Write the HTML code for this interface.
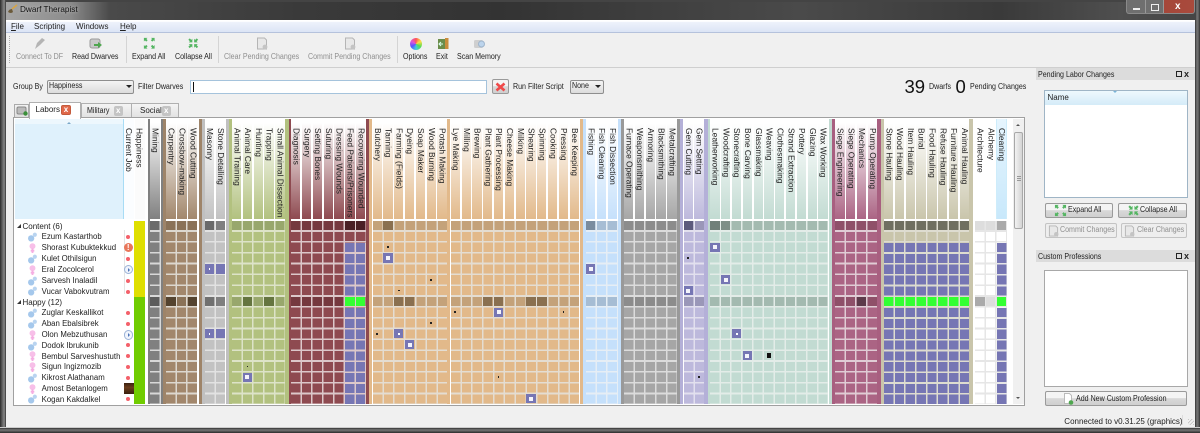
<!DOCTYPE html>
<html><head><meta charset="utf-8"><title>Dwarf Therapist</title>
<style>
html,body{margin:0;padding:0;background:#333}
#w{position:relative;width:1200px;height:433px;overflow:hidden;font:8px "Liberation Sans",sans-serif;color:#222;background:#f0f0f0;filter:blur(.3px)}
#w div,#w span,#w svg{position:absolute}
.t{white-space:nowrap;line-height:10px;transform:scaleX(.885);transform-origin:0 50%}
.t.u{transform:none}
.dis{color:#8f8f8f}
.combo{background:linear-gradient(#f4f4f4,#dcdcdc);border:1px solid #8e8e8e;border-radius:2px;box-sizing:border-box}
.btn{background:linear-gradient(#f4f4f4 45%,#d8d8d8 50%,#cfcfcf);border:1px solid #9a9a9a;border-radius:2px;box-sizing:border-box}
.btn2{background:#eee;border:1px solid #c4c4c4;border-radius:2px;box-sizing:border-box}
.dock{background:#dcdcdc;left:1036px;width:159px;height:12.5px}
.g{top:119px;height:284.5px;overflow:hidden}
.h{left:0;top:0;right:0;height:100.3px;display:flex}
.h i{display:block;flex:0 0 9.3px;margin-right:1.53px;height:100.3px;box-sizing:border-box;padding:9px 0 0 0;font:normal 8.4px/9.3px "Liberation Sans",sans-serif;writing-mode:vertical-rl;white-space:nowrap;color:#222;background:linear-gradient(#fff 4%,var(--b))}
.c{left:0;right:0;top:102px;bottom:0;background:repeating-linear-gradient(90deg,transparent 0 9.3px,var(--g) 9.3px 10.83px),repeating-linear-gradient(180deg,transparent 0 9.2px,var(--g) 9.2px 10.83px),var(--b)}
.r{left:0;right:0;height:9.2px;top:calc(var(--i)*10.83px);background:repeating-linear-gradient(90deg,var(--d) 0 9.3px,var(--g) 9.3px 10.83px)}
.k{right:0;top:calc(var(--i)*10.83px);height:calc(var(--n)*10.83px);background:repeating-linear-gradient(90deg,transparent 0 9.3px,var(--g) 9.3px 10.83px),repeating-linear-gradient(180deg,transparent 0 9.2px,var(--g) 9.2px 10.83px),#7676b4}
.p{left:calc(var(--c)*10.83px);top:calc(var(--i)*10.83px);width:9.3px;height:9.2px}
.q{background:#7676b4}
.q:after{content:"";position:absolute;left:2.6px;top:2.6px;width:4px;height:4px;background:#f4f4fb}
.s{background:#7676b4}
.s:after{content:"";position:absolute;left:4px;top:4px;width:1.6px;height:1.6px;background:#fff}
.o:after{content:"";position:absolute;left:3.8px;top:3.8px;width:1.6px;height:1.6px;background:#222}
.bar{top:119px;height:284.5px}
.n{left:41.6px;font-size:7.8px;line-height:10px;white-space:nowrap;letter-spacing:.02px}
.gi{left:28px;width:9px;height:10px}
.dot{left:126px;width:4px;height:4px;border-radius:50%;background:#f4606a}
</style></head><body>
<div id="w">
<svg width="0" height="0" style="left:0;top:0">
<defs>
<symbol id="ex" viewBox="0 0 14 14"><path d="M1 1h4l-1.200 1.200 1.400 1.400L3.600 5.200 2.200 3.800 1 5zM13 1v4l-1.200-1.200-1.400 1.400-1.600-1.600 1.400-1.400L9 1zM1 13V9l1.200 1.200 1.400-1.400 1.600 1.600-1.400 1.400L5 13zM13 13H9l1.200-1.200-1.400-1.400 1.600-1.600 1.400 1.400L13 9z" fill="#54b562"/></symbol>
<symbol id="co" viewBox="0 0 14 14"><path d="M6 6H2l1.200-1.200L1.500 3.100 3.100 1.500l1.700 1.700L6 2zM8 6V2l1.200 1.200 1.700-1.700 1.600 1.600-1.700 1.700L12 6zM6 8v4l-1.200-1.200-1.700 1.700-1.600-1.600 1.700-1.700L2 8zM8 8h4l-1.200 1.200 1.700 1.700-1.600 1.600-1.700-1.700L8 12z" fill="#54b562"/></symbol>
<symbol id="ma" viewBox="0 0 10 11"><circle cx="3.500" cy="7" r="3.500" fill="#a5c8ec"/><circle cx="7.600" cy="3" r="2.300" fill="#b9d4f0"/></symbol>
<symbol id="fe" viewBox="0 0 10 11"><circle cx="5" cy="3.500" r="3.300" fill="#f7bfe8"/><path d="M5 6v5M3 8.500h4" stroke="#f5aee2" stroke-width="2" fill="none"/></symbol>
<symbol id="doc" viewBox="0 0 12 13"><path d="M1.500 1h7l2 2v9h-9z" fill="#e8e8e8" stroke="#b5b5b5"/><circle cx="9" cy="10" r="2.400" fill="#c4c4c4"/></symbol>
</defs></svg>

<!-- window frame -->
<div style="left:0;top:0;width:1200px;height:20px;background:linear-gradient(90deg,#a8a8a8 0,#8c8c8c 70px,#4a4a4a 110px,#3a3a3a 300px,#333 500px,#4a4a4a 800px,#3a3a3a 1000px,#4f4f4f 1120px,#444 1200px)"></div>
<div style="left:0;top:0;width:1200px;height:2px;background:#444"></div>
<div style="left:0;top:0;width:6px;height:433px;background:linear-gradient(90deg,#2a2a2a,#555 30%,#888 70%,#333)"></div>
<div style="left:1195px;top:0;width:5px;height:433px;background:linear-gradient(90deg,#333,#777 40%,#555 80%,#2a2a2a)"></div>
<div style="left:0;top:427px;width:1200px;height:6px;background:linear-gradient(#fff 0 .5px,#333 1px,#777 3px,#2a2a2a)"></div>
<svg style="left:7px;top:4px" width="11" height="11" viewBox="0 0 11 11"><path d="M1 8q1-3 4-3l1 3q-2 2-5 0z" fill="#6b5a3a"/><path d="M5 5l5-4" stroke="#d9a441" stroke-width="1.500"/></svg>
<span class="t u" style="left:20px;top:5px;font-size:8.2px;color:#111;text-shadow:0 0 3px #ccc">Dwarf Therapist</span>
<div style="left:1126px;top:0;width:69px;height:14px;border:1px solid #8a8a8a;border-top:0;border-radius:0 0 3px 3px;box-sizing:border-box;background:linear-gradient(90deg,#6f6f6f 0 27%,#999 27% 28%,#6f6f6f 28% 54%,#999 54% 55%,#a5473a 55%,#a94a3c)"></div>
<div style="left:1133px;top:8px;width:7px;height:2px;background:#eee"></div>
<div style="left:1151px;top:4px;width:6px;height:5px;border:1.500px solid #eee"></div>
<span class="t u" style="left:1175px;top:2px;font-size:10px;font-weight:bold;color:#fff">x</span>

<!-- menu -->
<div style="left:6px;top:20px;width:1189px;height:13px;background:linear-gradient(#fff 0 1.500px,#eef2fb 2px,#dbe4f5);border-bottom:1px solid #b5c2dc;box-sizing:border-box"></div>
<span class="t u" style="left:11px;top:22px"><u>F</u>ile</span>
<span class="t u" style="left:34px;top:22px">Scripting</span>
<span class="t u" style="left:76px;top:22px">Windows</span>
<span class="t u" style="left:120px;top:22px"><u>H</u>elp</span>

<!-- toolbar -->
<div style="left:6px;top:33px;width:1189px;height:34.500px;background:#f0f0f0;border-bottom:1px solid #cfcfcf;box-sizing:border-box"></div>
<div style="left:8.500px;top:36px;width:1px;height:27px;border-left:1px dotted #aaa"></div>
<div style="left:126px;top:36px;width:1px;height:27px;background:#d4d4d4"></div>
<div style="left:217.500px;top:36px;width:1px;height:27px;background:#d4d4d4"></div>
<div style="left:397px;top:36px;width:1px;height:27px;background:#d4d4d4"></div>
<svg style="left:33px;top:37px" width="13" height="13" viewBox="0 0 13 13"><path d="M2 12L4 6l5-5 3 2-5 5z" fill="#b4b4b4"/></svg>
<svg style="left:89px;top:38px" width="14" height="12" viewBox="0 0 14 12"><rect x="1" y="1" width="10" height="9" rx="2" fill="#c9c9c9" stroke="#9a9a9a"/><path d="M5 6h4V4l4 3-4 3V8H5z" fill="#4ea64e"/></svg>
<svg style="left:143px;top:37px" width="12.500" height="12.500"><use href="#ex"/></svg>
<svg style="left:187px;top:37px" width="12.500" height="12.500"><use href="#co"/></svg>
<svg style="left:256px;top:37px" width="12" height="13"><use href="#doc"/></svg>
<svg style="left:344px;top:37px" width="12" height="13"><use href="#doc"/></svg>
<div style="left:409.500px;top:37.500px;width:12px;height:12px;border-radius:50%;background:conic-gradient(#f55,#fd4,#5d5,#4cd,#55f,#d5d,#f55)"></div>
<svg style="left:436.500px;top:37px" width="12" height="13" viewBox="0 0 12 13"><rect x="1" y="2" width="7" height="10" fill="#6b8d4a"/><rect x="8" y="1" width="3.500" height="11" fill="#c98d3c"/><path d="M2 7h4M4 5L2 7l2 2" stroke="#dfe" fill="none"/></svg>
<svg style="left:473px;top:38px" width="13" height="12" viewBox="0 0 13 12"><rect x="1" y="2" width="9" height="8" rx="1.500" fill="#cfcfcf"/><circle cx="8.500" cy="6" r="3" fill="#bcd4ec" stroke="#9fb5cc"/></svg>
<span class="t dis" style="left:16px;top:52px">Connect To DF</span>
<span class="t" style="left:72px;top:52px">Read Dwarves</span>
<span class="t" style="left:132px;top:52px">Expand All</span>
<span class="t" style="left:175px;top:52px">Collapse All</span>
<span class="t dis" style="left:224px;top:52px">Clear Pending Changes</span>
<span class="t dis" style="left:308px;top:52px">Commit Pending Changes</span>
<span class="t" style="left:402.500px;top:52px">Options</span>
<span class="t" style="left:436px;top:52px">Exit</span>
<span class="t" style="left:457px;top:52px">Scan Memory</span>

<!-- filter row -->
<span class="t" style="left:12.500px;top:81.500px">Group By</span>
<div class="combo" style="left:47px;top:79.500px;width:87px;height:14px"></div>
<span class="t" style="left:49px;top:81px">Happiness</span>
<div style="left:126px;top:85px;width:0;height:0;border:3px solid transparent;border-top:3px solid #222"></div>
<span class="t" style="left:138px;top:81.500px">Filter Dwarves</span>
<div style="left:190px;top:79.500px;width:297px;height:14px;background:#fff;border:1px solid #a5c3dc;box-sizing:border-box"></div>
<div style="left:192.500px;top:81.500px;width:1px;height:10px;background:#111"></div>
<div class="btn" style="left:491.500px;top:79px;width:17.500px;height:15px"></div>
<svg style="left:495px;top:81.500px" width="11" height="10" viewBox="0 0 11 10"><path d="M1.500 1.500l8 7M9.500 1.500l-8 7" stroke="#ef4a4a" stroke-width="2.600"/></svg>
<span class="t" style="left:513px;top:81.500px">Run Filter Script</span>
<div class="combo" style="left:569.500px;top:79.500px;width:34.500px;height:14px"></div>
<span class="t" style="left:571.500px;top:81px">None</span>
<div style="left:594.500px;top:85px;width:0;height:0;border:3px solid transparent;border-top:3px solid #222"></div>
<span class="t u" style="left:904.500px;top:77px;font-size:18.500px;line-height:20px;color:#111">39</span>
<span class="t" style="left:928.500px;top:81.500px">Dwarfs</span>
<span class="t u" style="left:955.500px;top:77px;font-size:18.500px;line-height:20px;color:#111">0</span>
<span class="t" style="left:970px;top:81.500px">Pending Changes</span>

<!-- tabs -->
<div style="left:13.500px;top:103.500px;width:15px;height:14px;background:linear-gradient(#f2f2f2,#ddd);border:1px solid #aaa;box-sizing:border-box"></div>
<svg style="left:15.500px;top:106px" width="12" height="10" viewBox="0 0 12 10"><rect x="1" y="1" width="9" height="7" rx="1.500" fill="#bbb" stroke="#888"/><circle cx="9.500" cy="7.500" r="2.200" fill="#3a8f3a"/></svg>
<div style="left:81px;top:103px;width:51px;height:15px;background:linear-gradient(#f4f4f4,#e2e2e2);border:1px solid #b0b0b0;box-sizing:border-box"></div>
<div style="left:132px;top:103px;width:47px;height:15px;background:linear-gradient(#f4f4f4,#e2e2e2);border:1px solid #b0b0b0;border-left:0;box-sizing:border-box"></div>
<div style="left:13px;top:117px;width:1012px;height:288.500px;background:#fff;border:1px solid #a0a0a0;box-sizing:border-box"></div>
<div style="left:29px;top:101.500px;width:52px;height:17px;background:#fff;border:1px solid #b0b0b0;border-bottom:0;box-sizing:border-box"></div>
<span class="t u" style="left:35.500px;top:105px">Labors</span>
<div style="left:61px;top:105px;width:10px;height:10px;border-radius:2px;background:#e0684a;border:1px solid #c45a3c;box-sizing:border-box;color:#fff;font:bold 8px/8px 'Liberation Sans',sans-serif;text-align:center">x</div>
<span class="t" style="left:87px;top:105.500px">Military</span>
<div style="left:113.500px;top:106px;width:9.500px;height:9.500px;border-radius:2px;background:#c4c4c4;color:#fff;font:bold 8px/9px 'Liberation Sans',sans-serif;text-align:center">x</div>
<span class="t u" style="left:140px;top:105.500px">Social</span>
<div style="left:161.500px;top:106px;width:9.500px;height:9.500px;border-radius:2px;background:#c4c4c4;color:#fff;font:bold 8px/9px 'Liberation Sans',sans-serif;text-align:center">x</div>

<!-- name header -->
<div style="left:15px;top:119px;width:108.500px;height:100.300px;background:linear-gradient(#edf7fd 0 5px,#dff1fc 5px);border-right:1px solid #a8dcf5;box-sizing:border-box"></div>
<div style="left:66.500px;top:120px;width:0;height:0;border:2px solid transparent;border-bottom:2.500px solid #7aa8c8"></div>
<div style="left:124px;top:119px;width:10px;height:100.300px;background:#fbfdff;padding:0"></div>
<span class="t u" style="left:124px;top:128px;font-size:8.400px;line-height:10px;writing-mode:vertical-rl">Current Job</span>
<div style="left:134.500px;top:119px;width:10.200px;height:100.300px;background:#fbfbfb"></div>
<span class="t u" style="left:134.500px;top:128px;font-size:8.400px;line-height:10px;writing-mode:vertical-rl">Happiness</span>

<!-- happiness column -->
<div style="left:134px;top:220.500px;width:10.500px;height:81px;background:#dfdf00"></div>
<div style="left:134px;top:296.500px;width:10.500px;height:107px;background:#70cc00"></div>
<!-- job col frame -->
<div style="left:123.500px;top:230px;width:10px;height:64px;background:#fff;border-left:1px solid #e4e4e4;box-sizing:border-box"></div>

<!-- separators -->
<div class="bar" style="left:147.700px;width:2.500px;background:#808080"></div>
<div class="bar" style="left:161.300px;width:2px;background:#808080"></div>
<div class="bar" style="left:163.300px;width:2.800px;background:#9e8469"></div>
<div class="bar" style="left:198.900px;width:2.800px;background:#9e8469"></div>
<div class="bar" style="left:201.700px;width:3px;background:#c0c0c0"></div>
<div class="bar" style="left:225.500px;width:3px;background:#c0c0c0"></div>
<div class="bar" style="left:228.500px;width:3px;background:#b2c17f"></div>
<div class="bar" style="left:285.200px;width:3.500px;background:#b2c17f"></div>
<div class="bar" style="left:288.700px;width:2.300px;background:#8e4a50"></div>
<div class="bar" style="left:366.300px;width:2.800px;background:#8e4a50"></div>
<div class="bar" style="left:369.100px;width:3.200px;background:#e2b98a"></div>
<div class="bar" style="left:447.300px;width:3px;background:#e2b98a"></div>
<div class="bar" style="left:579.500px;width:3.500px;background:#e2b98a"></div>
<div class="bar" style="left:583px;width:2.800px;background:#c5e0fb"></div>
<div class="bar" style="left:618px;width:3px;background:#c5e0fb"></div>
<div class="bar" style="left:621px;width:2.800px;background:#999"></div>
<div class="bar" style="left:677.300px;width:3px;background:#999"></div>
<div class="bar" style="left:680.300px;width:3.200px;background:#b4b0d8"></div>
<div class="bar" style="left:704.300px;width:4px;background:#b4b0d8"></div>
<div class="bar" style="left:708.300px;width:2px;background:#c2dbd2"></div>
<div class="bar" style="left:828.500px;width:3.500px;background:#c2dbd2"></div>
<div class="bar" style="left:832px;width:3px;background:#a85f80"></div>
<div class="bar" style="left:877.300px;width:3.500px;background:#a85f80"></div>
<div class="bar" style="left:880.800px;width:3px;background:#c9c5ab"></div>
<div class="bar" style="left:969.300px;width:3.500px;background:#c9c5ab"></div>

<!-- Mining -->
<div class="g" style="left:150.400px;width:10.300px;--b:#808080;--g:#d8d8d8;--d:#6a6a6a"><div class="h"><i>Mining</i></div><div class="c"><div class="r" style="--i:0"></div><div class="r" style="--i:7;--d:#5c5c5c"></div></div></div>

<!-- Brown -->
<div class="g" style="left:166.400px;width:31px;--b:#a2876c;--g:#ddd8d0;--d:#8a7258"><div class="h"><i>Carpentry</i><i>Crossbow-making</i><i>Wood Cutting</i></div><div class="c"><div class="r" style="--i:0"></div><div class="r" style="--i:7"></div><div class="p" style="--c:0;--i:7;background:#54432f"></div><div class="p" style="--c:2;--i:7;background:#54432f"></div></div></div>

<!-- Stone -->
<div class="g" style="left:204.700px;width:20.500px;--b:#c2c2c2;--g:#e2e2e2;--d:#7f7f7f"><div class="h"><i>Masonry</i><i>Stone Detailing</i></div><div class="c"><div class="p" style="--c:0;--i:0;background:#6a6a6a"></div><div class="p" style="--c:1;--i:0;background:#7f7f7f"></div><div class="r" style="--i:7"></div><div class="p" style="--c:0;--i:7;background:#707070"></div><div class="p s" style="--c:0;--i:4"></div><div class="p" style="--c:1;--i:4;background:#7676b4"></div><div class="p s" style="--c:0;--i:10"></div><div class="p" style="--c:1;--i:10;background:#7676b4"></div></div></div>

<!-- Green -->
<div class="g" style="left:232px;width:53px;--b:#b2c17f;--g:#dde3c8;--d:#98a76c"><div class="h"><i>Animal Training</i><i>Animal Care</i><i>Hunting</i><i>Trapping</i><i>Small Animal Dissection</i></div><div class="c"><div class="r" style="--i:0"></div><div class="r" style="--i:7"></div><div class="p" style="--c:1;--i:7;background:#65753f"></div><div class="p" style="--c:3;--i:7;background:#65753f"></div><div class="p o" style="--c:1;--i:13"></div><div class="p q" style="--c:1;--i:14"></div></div></div>

<!-- Red -->
<div class="g" style="left:291.200px;width:75px;--b:#8e4a50;--g:#dcc8ca;--d:#75393f"><div class="h"><i>Diagnosis</i><i>Surgery</i><i>Setting Bones</i><i>Suturing</i><i>Dressing Wounds</i><i>Feed Patients/Prisoners</i><i>Recovering Wounded</i></div><div class="c"><div class="r" style="--i:0"></div><div class="p" style="--c:5;--i:0;background:#4a2025"></div><div class="p" style="--c:6;--i:0;background:#4a2025"></div><div class="r" style="--i:7"></div><div class="k" style="left:54.150px;--i:2;--n:5"></div><div class="k" style="left:54.150px;--i:8;--n:9"></div><div class="p" style="--c:5;--i:7;background:#33ff33"></div><div class="p" style="--c:6;--i:7;background:#33ff33"></div></div></div>

<!-- Orange 1 -->
<div class="g" style="left:372.500px;width:74.500px;--b:#e2b98a;--g:#e4ddd2;--d:#c4a27a"><div class="h"><i>Butchery</i><i>Tanning</i><i>Farming (Fields)</i><i>Dyeing</i><i>Soap Maker</i><i>Wood Burning</i><i>Potash Making</i></div><div class="c"><div class="r" style="--i:0"></div><div class="p" style="--c:1;--i:0;background:#8a7050"></div><div class="r" style="--i:7"></div><div class="p" style="--c:2;--i:7;background:#8a7050"></div><div class="p" style="--c:3;--i:7;background:#8a7050"></div><div class="p o" style="--c:1;--i:2"></div><div class="p q" style="--c:1;--i:3"></div><div class="p o" style="--c:5;--i:5"></div><div class="p o" style="--c:2;--i:6"></div><div class="p o" style="--c:5;--i:9"></div><div class="p o" style="--c:0;--i:10"></div><div class="p s" style="--c:2;--i:10"></div><div class="p q" style="--c:3;--i:11"></div></div></div>

<!-- Orange 2 -->
<div class="g" style="left:450.700px;width:128.800px;--b:#e2b98a;--g:#e4ddd2;--d:#c4a27a"><div class="h"><i>Lye Making</i><i>Milling</i><i>Brewing</i><i>Plant Gathering</i><i>Plant Processing</i><i>Cheese Making</i><i>Milking</i><i>Shearing</i><i>Spinning</i><i>Cooking</i><i>Pressing</i><i>Bee Keeping</i></div><div class="c"><div class="r" style="--i:0"></div><div class="r" style="--i:7"></div><div class="p" style="--c:3;--i:7;background:#8a7050"></div><div class="p" style="--c:4;--i:7;background:#8a7050"></div><div class="p" style="--c:7;--i:7;background:#8a7050"></div><div class="p" style="--c:8;--i:7;background:#8a7050"></div><div class="p o" style="--c:0;--i:8"></div><div class="p q" style="--c:4;--i:8"></div><div class="p o" style="--c:10;--i:8"></div><div class="p o" style="--c:4;--i:14"></div><div class="p q" style="--c:7;--i:16"></div></div></div>

<!-- Fish -->
<div class="g" style="left:586px;width:32px;--b:#c5e0fb;--g:#e6eef5;--d:#a6bdd4"><div class="h"><i>Fishing</i><i>Fish Cleaning</i><i>Fish Dissection</i></div><div class="c"><div class="r" style="--i:0"></div><div class="p" style="--c:0;--i:0;background:#7a8c9e"></div><div class="r" style="--i:7"></div><div class="p q" style="--c:0;--i:4"></div></div></div>

<!-- Metal -->
<div class="g" style="left:624px;width:53.200px;--b:#a6a6a6;--g:#dcdcdc;--d:#8c8c8c"><div class="h"><i>Furnace Operating</i><i>Weaponsmithing</i><i>Armoring</i><i>Blacksmithing</i><i>Metalcrafting</i></div><div class="c"><div class="r" style="--i:0"></div><div class="r" style="--i:7"></div></div></div>

<!-- Gem -->
<div class="g" style="left:683.600px;width:20.500px;--b:#bdb9dc;--g:#e2e0ee;--d:#9a97b8"><div class="h"><i>Gem Cutting</i><i>Gem Setting</i></div><div class="c"><div class="r" style="--i:0"></div><div class="p" style="--c:0;--i:0;background:#5c5a7c"></div><div class="r" style="--i:7"></div><div class="p o" style="--c:0;--i:3"></div><div class="p q" style="--c:0;--i:6"></div><div class="p o" style="--c:1;--i:14"></div></div></div>

<!-- Craft -->
<div class="g" style="left:710.300px;width:118px;--b:#c2dbd2;--g:#e3ece8;--d:#a3bab0"><div class="h"><i>Leatherworking</i><i>Woodcrafting</i><i>Stonecrafting</i><i>Bone Carving</i><i>Glassmaking</i><i>Weaving</i><i>Clothesmaking</i><i>Strand Extraction</i><i>Pottery</i><i>Glazing</i><i>Wax Working</i></div><div class="c"><div class="r" style="--i:0"></div><div class="p" style="--c:0;--i:0;background:#71807a"></div><div class="p" style="--c:1;--i:0;background:#7e8f87"></div><div class="r" style="--i:7"></div><div class="p q" style="--c:0;--i:2"></div><div class="p q" style="--c:1;--i:5"></div><div class="p s" style="--c:2;--i:10"></div><div class="p q" style="--c:3;--i:12"></div><div class="p" style="--c:5;--i:12"><span style="left:2.500px;top:2.500px;width:4.500px;height:4.500px;background:#111"></span></div></div></div>

<!-- Siege -->
<div class="g" style="left:835.300px;width:42px;--b:#ab6484;--g:#e0ccd5;--d:#8f5069"><div class="h"><i>Siege Engineering</i><i>Siege Operating</i><i>Mechanics</i><i>Pump Operating</i></div><div class="c"><div class="r" style="--i:0"></div><div class="r" style="--i:7"></div><div class="p" style="--c:2;--i:7;background:#5d3a4a"></div></div></div>

<!-- Hauling -->
<div class="g" style="left:884px;width:85.200px;--b:#c9c5ab;--g:#dedcd0;--d:#6f6f60"><div class="h"><i>Stone Hauling</i><i>Wood Hauling</i><i>Item Hauling</i><i>Burial</i><i>Food Hauling</i><i>Refuse Hauling</i><i>Furniture Hauling</i><i>Animal Hauling</i></div><div class="c"><div class="r" style="--i:0"></div><div class="k" style="left:0;--i:2;--n:5"></div><div class="r" style="--i:7;--d:#33ff33"></div><div class="k" style="left:0;--i:8;--n:9"></div></div></div>

<!-- Other -->
<div class="g" style="left:975.300px;width:32px;--b:#fff;--g:#e6e6e6;--d:#ddd"><div class="h"><i style="background:#fff">Architecture</i><i style="background:#fff">Alchemy</i><i style="background:linear-gradient(#e6f5fe,#c8e8fb);box-shadow:-.5px 0 #9ed8f4,.5px 0 #9ed8f4">Cleaning</i></div><div class="c"><div class="r" style="--i:0"></div><div class="p" style="--c:2;--i:0;background:#aaa"></div><div class="r" style="--i:7"></div><div class="p" style="--c:0;--i:7;background:#aaa"></div><div class="p" style="--c:2;--i:7;background:#33ff33"></div><div class="k" style="left:21.660px;--i:2;--n:5"></div><div class="k" style="left:21.660px;--i:8;--n:9"></div></div></div>

<!-- name rows -->
<div style="left:17px;top:223.500px;width:0;height:0;border-style:solid;border-width:0 0 4px 4px;border-color:transparent transparent #333 transparent"></div>
<span class="t u" style="left:22.500px;top:221.500px">Content (6)</span>
<div style="left:17px;top:299.500px;width:0;height:0;border-style:solid;border-width:0 0 4px 4px;border-color:transparent transparent #333 transparent"></div>
<span class="t u" style="left:22.500px;top:297.500px">Happy (12)</span>

<svg class="gi" style="top:232px" width="9" height="10"><use href="#ma"/></svg><span class="n" style="top:232.300px">Ezum Kastarthob</span>
<svg class="gi" style="top:243px" width="9" height="10"><use href="#fe"/></svg><span class="n" style="top:243.100px">Shorast Kubuktekkud</span>
<svg class="gi" style="top:254px" width="9" height="10"><use href="#ma"/></svg><span class="n" style="top:254px">Kulet Othilsigun</span>
<svg class="gi" style="top:265px" width="9" height="10"><use href="#fe"/></svg><span class="n" style="top:264.800px">Eral Zocolcerol</span>
<svg class="gi" style="top:276px" width="9" height="10"><use href="#ma"/></svg><span class="n" style="top:275.600px">Sarvesh Inaladil</span>
<svg class="gi" style="top:286px" width="9" height="10"><use href="#ma"/></svg><span class="n" style="top:286.500px">Vucar Vabokvutram</span>
<svg class="gi" style="top:308px" width="9" height="10"><use href="#ma"/></svg><span class="n" style="top:308.100px">Zuglar Keskallikot</span>
<svg class="gi" style="top:319px" width="9" height="10"><use href="#ma"/></svg><span class="n" style="top:319px">Aban Ebalsibrek</span>
<svg class="gi" style="top:330px" width="9" height="10"><use href="#fe"/></svg><span class="n" style="top:329.800px">Olon Mebzuthusan</span>
<svg class="gi" style="top:341px" width="9" height="10"><use href="#ma"/></svg><span class="n" style="top:340.600px">Dodok Ibrukunib</span>
<svg class="gi" style="top:351px" width="9" height="10"><use href="#fe"/></svg><span class="n" style="top:351.500px">Bembul Sarveshustuth</span>
<svg class="gi" style="top:362px" width="9" height="10"><use href="#fe"/></svg><span class="n" style="top:362.300px">Sigun Ingizmozib</span>
<svg class="gi" style="top:373px" width="9" height="10"><use href="#ma"/></svg><span class="n" style="top:373.100px">Kikrost Alathanam</span>
<svg class="gi" style="top:384px" width="9" height="10"><use href="#fe"/></svg><span class="n" style="top:384px">Amost Betanlogem</span>
<svg class="gi" style="top:394px" width="9" height="10"><use href="#ma"/></svg><span class="n" style="top:394.800px">Kogan Kakdalkel</span>

<!-- job icons -->
<div class="dot" style="top:235px"></div>
<div style="left:123.500px;top:242.500px;width:9.500px;height:9.500px;border-radius:50%;background:#e8765a;color:#fff;font:bold 8px/9.500px 'Liberation Sans',sans-serif;text-align:center">!</div>
<div class="dot" style="top:257px"></div>
<div style="left:123.500px;top:264.500px;width:9.500px;height:9.500px;border-radius:50%;background:#f0f4fc;border:1px solid #9db4d8;box-sizing:border-box"></div>
<div style="left:127.500px;top:267.500px;width:0;height:0;border-style:solid;border-width:2px 0 2px 2.500px;border-color:transparent transparent transparent #4d74b8"></div>
<div class="dot" style="top:278.500px"></div>
<div class="dot" style="top:289.500px"></div>
<div class="dot" style="top:311px"></div>
<div class="dot" style="top:322px"></div>
<div style="left:123.500px;top:330px;width:9.500px;height:9.500px;border-radius:50%;background:#f0f4fc;border:1px solid #9db4d8;box-sizing:border-box"></div>
<div style="left:127.500px;top:333px;width:0;height:0;border-style:solid;border-width:2px 0 2px 2.500px;border-color:transparent transparent transparent #4d74b8"></div>
<div class="dot" style="top:343px"></div>
<div class="dot" style="top:354px"></div>
<div class="dot" style="top:365px"></div>
<div class="dot" style="top:376px"></div>
<div style="left:123.500px;top:383px;width:10px;height:10.500px;background:linear-gradient(#3a2010,#6a3c1c 40%,#3a2010)"></div>
<div class="dot" style="top:397px"></div>

<!-- scrollbar -->
<div style="left:1012.500px;top:118.500px;width:11.500px;height:285.500px;background:#f0f0f0"></div>
<div style="left:1013.500px;top:131.500px;width:9.500px;height:97px;background:linear-gradient(90deg,#f2f2f2,#d4d4d4);border:1px solid #a8a8a8;border-radius:2px;box-sizing:border-box"></div>
<div style="left:1015.500px;top:122px;width:0;height:0;border:2px solid transparent;border-bottom:2.500px solid #555"></div>
<div style="left:1015.500px;top:397px;width:0;height:0;border:2px solid transparent;border-top:2.500px solid #555"></div>
<div style="left:1016.500px;top:176px;width:4px;height:5px;background:repeating-linear-gradient(#999 0 1px,transparent 1px 2px)"></div>

<!-- pending dock -->
<div class="dock" style="top:67.500px"></div>
<span class="t" style="left:1037.500px;top:70px">Pending Labor Changes</span>
<div style="left:1175.500px;top:71px;width:4px;height:4px;border:1px solid #222"></div>
<span class="t u" style="left:1184px;top:69px;font-size:9px;font-weight:bold;color:#222">x</span>
<div style="left:1044px;top:90px;width:143.500px;height:107.500px;background:#fff;border:1px solid #9fb5c6;box-sizing:border-box"></div>
<div style="left:1045px;top:91px;width:141.500px;height:13.500px;background:linear-gradient(#eef8fd,#d4ebf8)"></div>
<span class="t u" style="left:1047.500px;top:93px">Name</span>
<div style="left:1113px;top:91px;width:0;height:0;border:2px solid transparent;border-top:2.500px solid #7ab4d8"></div>
<div class="btn" style="left:1044.700px;top:202.500px;width:68px;height:15px"></div>
<svg style="left:1054px;top:203.500px" width="13" height="13"><use href="#ex"/></svg>
<span class="t" style="left:1067.500px;top:205px">Expand All</span>
<div class="btn" style="left:1118px;top:202.500px;width:68.500px;height:15px"></div>
<svg style="left:1126.500px;top:203.500px" width="13" height="13"><use href="#co"/></svg>
<span class="t" style="left:1140px;top:205px">Collapse All</span>
<div class="btn2" style="left:1045px;top:222.500px;width:71.500px;height:15px"></div>
<svg style="left:1047.500px;top:224.500px" width="11" height="12"><use href="#doc"/></svg>
<span class="t dis" style="left:1060px;top:225px">Commit Changes</span>
<div class="btn2" style="left:1121px;top:222.500px;width:65.500px;height:15px"></div>
<svg style="left:1124px;top:224.500px" width="11" height="12"><use href="#doc"/></svg>
<span class="t dis" style="left:1137px;top:225px">Clear Changes</span>

<!-- custom dock -->
<div class="dock" style="top:249.500px"></div>
<span class="t" style="left:1037.500px;top:251.500px">Custom Professions</span>
<div style="left:1175.500px;top:253px;width:4px;height:4px;border:1px solid #222"></div>
<span class="t u" style="left:1184px;top:251px;font-size:9px;font-weight:bold;color:#222">x</span>
<div style="left:1044px;top:270px;width:143.500px;height:117px;background:#fff;border:1px solid #a8a8a8;box-sizing:border-box"></div>
<div class="btn" style="left:1044.700px;top:391px;width:142px;height:15px"></div>
<svg style="left:1063px;top:393px" width="11" height="12" viewBox="0 0 11 12"><path d="M1.500 .5h5l2 2v8h-7z" fill="#fff" stroke="#bbb"/><circle cx="8" cy="9.500" r="2.300" fill="#4ea64e"/></svg>
<span class="t" style="left:1076px;top:393.500px">Add New Custom Profession</span>

<!-- status -->
<span class="t u" style="left:1064.300px;top:416.500px">Connected to v0.31.25 (graphics)</span>
<div style="left:1182px;top:415px;width:1px;height:10px;background:#ddd"></div>
<div style="left:1188px;top:419px;width:6px;height:6px;background:repeating-linear-gradient(135deg,#bbb 0 1px,transparent 1px 2.500px)"></div>
</div>
</body></html>
